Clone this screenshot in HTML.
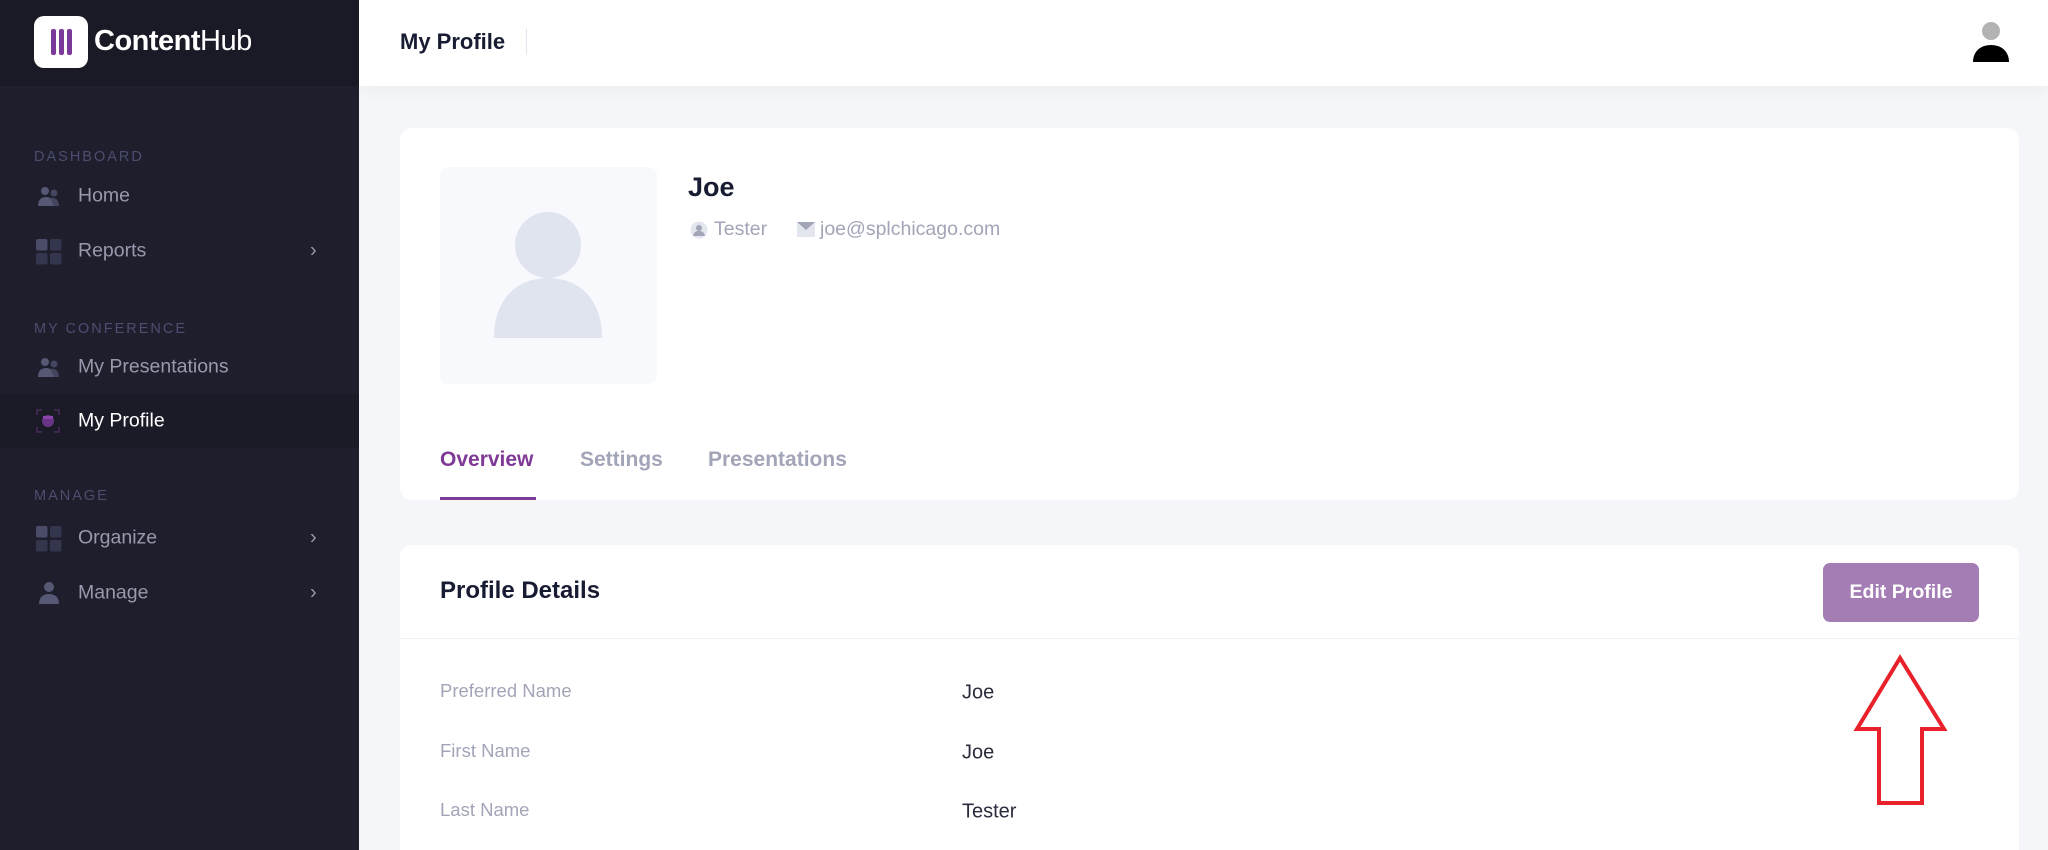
<!DOCTYPE html>
<html><head><meta charset="utf-8"><style>
*{margin:0;padding:0;box-sizing:border-box}
html,body{width:2048px;height:850px;overflow:hidden}
body{background:#f5f6f9;font-family:"Liberation Sans",sans-serif;position:relative}
.abs{position:absolute}
#side{left:0;top:0;width:359px;height:850px;background:#1e1e2d}
#logoA{left:0;top:0;width:359px;height:86px;background:#1a1a27}
.sec{left:34px;font-size:14.5px;letter-spacing:2px;color:#4c4e6f}
.item{left:78px;font-size:19.5px;color:#9899ac;transform:translateY(-50%)}
.chev{left:310px;color:#9899ac;font-size:20px;transform:translateY(-50%)}
#hdr{left:359px;top:0;width:1689px;height:86px;background:#fff;box-shadow:0 6px 12px rgba(0,0,0,.03)}
.card{background:#fff;border-radius:12px}
.lbl{left:440px;font-size:18.5px;color:#a1a5b7;transform:translateY(-50%)}
.val{left:962px;font-size:20px;color:#2b2d3c;transform:translateY(-50%)}
</style></head><body>
<div id="side" class="abs"></div>
<div id="logoA" class="abs"></div>
<div class="abs" style="left:34px;top:16px;width:54px;height:52px;background:#fff;border-radius:10px"></div>
<div class="abs" style="left:51px;top:29px;width:5px;height:26px;background:#7b3a9a;border-radius:2px"></div>
<div class="abs" style="left:59px;top:29px;width:5px;height:26px;background:#7b3a9a;border-radius:2px"></div>
<div class="abs" style="left:67px;top:29px;width:5px;height:26px;background:#7b3a9a;border-radius:2px"></div>
<div class="abs" style="left:94px;top:25px;font-size:29px;color:#fff;letter-spacing:-0.5px"><b>Content</b>Hub</div>

<div class="abs sec" style="top:149px">DASHBOARD</div>
<div class="abs sec" style="top:321px">MY CONFERENCE</div>
<div class="abs sec" style="top:488px">MANAGE</div>
<div class="abs" style="left:0;top:394px;width:359px;height:54px;background:#1b1b28"></div>

<svg class="abs" style="left:36px;top:184px" width="26" height="24"><circle cx="9" cy="7" r="4" fill="#565874"/><circle cx="18" cy="9" r="3.5" fill="#444660"/><path d="M2 22c0-6 3-9 8-9s8 3 8 9z" fill="#565874"/><path d="M14 14c4-1 9 1 9 8h-5z" fill="#444660"/></svg>
<div class="abs item" style="top:196px">Home</div>
<svg class="abs" style="left:36px;top:239px" width="26" height="26"><rect x="0" y="0" width="11.5" height="11.5" rx="2" fill="#4a4c68"/><rect x="14" y="0" width="11.5" height="11.5" rx="2" fill="#34364d"/><rect x="0" y="14" width="11.5" height="11.5" rx="2" fill="#34364d"/><rect x="14" y="14" width="11.5" height="11.5" rx="2" fill="#34364d"/></svg>
<div class="abs item" style="top:251px">Reports</div><div class="abs chev" style="top:251px">›</div>
<svg class="abs" style="left:36px;top:355px" width="26" height="24"><circle cx="9" cy="7" r="4" fill="#565874"/><circle cx="18" cy="9" r="3.5" fill="#444660"/><path d="M2 22c0-6 3-9 8-9s8 3 8 9z" fill="#565874"/><path d="M14 14c4-1 9 1 9 8h-5z" fill="#444660"/></svg>
<div class="abs item" style="top:367px">My Presentations</div>
<svg class="abs" style="left:36px;top:409px" width="24" height="24"><path d="M1 6V1h5M18 1h5v5M23 18v5h-5M6 23H1v-5" stroke="#4a2a5e" stroke-width="1.5" fill="none"/><circle cx="12" cy="12" r="6" fill="#6b3385"/><rect x="7" y="7" width="10" height="3" fill="#8b45a8"/></svg>
<div class="abs item" style="top:421px;color:#fff">My Profile</div>
<svg class="abs" style="left:36px;top:526px" width="26" height="26"><rect x="0" y="0" width="11.5" height="11.5" rx="2" fill="#4a4c68"/><rect x="14" y="0" width="11.5" height="11.5" rx="2" fill="#34364d"/><rect x="0" y="14" width="11.5" height="11.5" rx="2" fill="#34364d"/><rect x="14" y="14" width="11.5" height="11.5" rx="2" fill="#34364d"/></svg>
<div class="abs item" style="top:538px">Organize</div><div class="abs chev" style="top:538px">›</div>
<svg class="abs" style="left:38px;top:581px" width="22" height="24"><circle cx="11" cy="6" r="5" fill="#565874"/><path d="M1 23c0-7 4-10 10-10s10 3 10 10z" fill="#565874"/></svg>
<div class="abs item" style="top:593px">Manage</div><div class="abs chev" style="top:593px">›</div>

<div id="hdr" class="abs"></div>
<div class="abs" style="left:400px;top:29px;font-size:22px;font-weight:bold;color:#181c32">My Profile</div>
<div class="abs" style="left:526px;top:29px;width:1px;height:26px;background:#e4e6ef"></div>
<svg class="abs" style="left:1972px;top:21px" width="38" height="42"><ellipse cx="19" cy="10" rx="9" ry="9" fill="#b3b3b3"/><path d="M1 41c0-10 7-17 18-17s18 7 18 17z" fill="#000"/></svg>

<div class="abs card" style="left:400px;top:128px;width:1619px;height:372px"></div>
<div class="abs" style="left:440px;top:167px;width:217px;height:217px;background:#f8f9fc;border-radius:8px"></div>
<svg class="abs" style="left:490px;top:210px" width="116" height="130"><ellipse cx="58" cy="35" rx="33" ry="33" fill="#e0e4ef"/><path d="M4 128c0-40 24-60 54-60s54 20 54 60z" fill="#e0e4ef"/></svg>
<div class="abs" style="left:688px;top:172px;font-size:27px;font-weight:bold;color:#181c32">Joe</div>
<svg class="abs" style="left:690px;top:221px" width="18" height="18"><circle cx="9" cy="9" r="8.5" fill="#e4e6ef"/><circle cx="9" cy="7" r="3" fill="#a1a5b7"/><path d="M3 15c1-4 3-5 6-5s5 1 6 5z" fill="#a1a5b7"/></svg>
<div class="abs" style="left:714px;top:218px;font-size:19.5px;color:#a1a5b7">Tester</div>
<svg class="abs" style="left:797px;top:222px" width="18" height="15"><rect width="18" height="15" fill="#e4e6ef"/><path d="M0 0l9 8 9-8z" fill="#a1a5b7"/></svg>
<div class="abs" style="left:820px;top:218px;font-size:19.5px;color:#a1a5b7">joe@splchicago.com</div>
<div class="abs" style="left:440px;top:448px;font-size:21px;font-weight:bold;color:#7e3a96">Overview</div>
<div class="abs" style="left:580px;top:448px;font-size:21px;font-weight:bold;color:#a1a5b7">Settings</div>
<div class="abs" style="left:708px;top:448px;font-size:21px;font-weight:bold;color:#a1a5b7">Presentations</div>
<div class="abs" style="left:440px;top:497px;width:96px;height:3px;background:#7e3a96"></div>

<div class="abs card" style="left:400px;top:545px;width:1619px;height:305px;border-radius:12px 12px 0 0"></div>
<div class="abs" style="left:440px;top:577px;font-size:24px;font-weight:bold;color:#181c32">Profile Details</div>
<div class="abs" style="left:1823px;top:563px;width:156px;height:59px;background:#a57db5;border-radius:7px;color:#fff;font-size:19.5px;font-weight:bold;text-align:center;line-height:59px">Edit Profile</div>
<div class="abs" style="left:400px;top:638px;width:1619px;height:1px;background:#eff2f5"></div>
<div class="abs lbl" style="top:691px">Preferred Name</div><div class="abs val" style="top:693px">Joe</div>
<div class="abs lbl" style="top:751px">First Name</div><div class="abs val" style="top:753px">Joe</div>
<div class="abs lbl" style="top:810px">Last Name</div><div class="abs val" style="top:812px">Tester</div>

<svg class="abs" style="left:1850px;top:650px" width="102" height="160"><path d="M50 8L7 79H29V153H72V79H94Z" fill="#fff" stroke="#e8212a" stroke-width="4"/></svg>
</body></html>
